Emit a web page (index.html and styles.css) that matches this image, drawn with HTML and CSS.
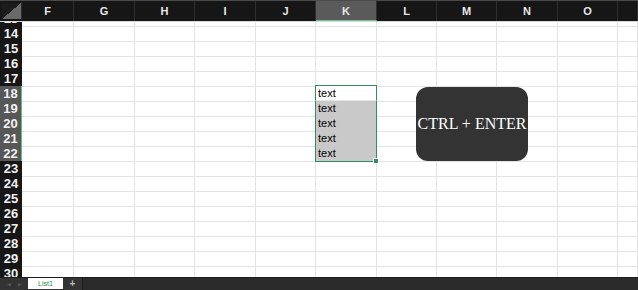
FILE: index.html
```html
<!DOCTYPE html>
<html lang="en">
<head>
  <meta charset="UTF-8" />
  <title>List1</title>
  <link rel="stylesheet" href="styles.css">
</head>
<body>

  <div class="app">
    <div class="col-heads">
      <div class="corner"></div>
      <div class="col-head">F</div>
      <div class="col-head">G</div>
      <div class="col-head">H</div>
      <div class="col-head">I</div>
      <div class="col-head">J</div>
      <div class="col-head active">K</div>
      <div class="col-head">L</div>
      <div class="col-head">M</div>
      <div class="col-head">N</div>
      <div class="col-head">O</div>
      <div class="col-head"></div>
    </div>

    <div class="viewport">
      <div class="rows" id="rows"></div>
    </div>

    <div class="hint">CTRL + ENTER</div>

    <div class="tabs">
      <div class="nav"><span>&#9664;</span><span>&#9654;</span></div>
      <div class="tab">List1</div>
      <div class="add">+</div>
      <div class="tabs-rest"></div>
    </div>
  </div>

  <script>
    const rows = document.getElementById('rows');
    const cols = 11;
    for (let r = 13; r <= 30; r++) {
      const row = document.createElement('div');
      row.className = 'row';
      const head = document.createElement('div');
      head.className = 'row-head' + (r >= 18 && r <= 22 ? ' active' : '');
      head.textContent = r;
      row.appendChild(head);
      for (let c = 0; c < cols; c++) {
        const cell = document.createElement('div');
        cell.className = 'cell';
        if (c === 5 && r >= 18 && r <= 22) {
          cell.classList.add('sel');
          cell.textContent = 'text';
          if (r === 18) cell.classList.add('first');
          if (r === 22) cell.classList.add('last');
        }
        row.appendChild(cell);
      }
      rows.appendChild(row);
    }
  </script>
</body>
</html>
```

FILE: styles.css
```css
* {
  box-sizing: border-box;
}

body {
  margin: 0;
  background: #fff;
  font-family: 'Liberation Sans', Arial, sans-serif;
}

.app {
  position: relative;
  width: 638px;
  height: 290px;
  display: flex;
  flex-direction: column;
  overflow: hidden;
}

.col-heads,
.row {
  display: grid;
  grid-template-columns: 22px 52px 61px 60px 61px 60px 61px 60px 60px 61px 60px 20px;
}

.col-heads {
  height: 22px;
  background: #161616;
  border-top: 1px solid #4a4a4a;
  border-bottom: 1px solid #d8d8d8;
}

.corner {
  background: linear-gradient(to bottom right, #1c1c1c 50%, #6a6a6a 50%);
  border: 2px solid #161616;
  border-right: 1px solid #2e2e2e;
}

.col-head {
  color: #e8e8e8;
  font-size: 11px;
  font-weight: bold;
  display: flex;
  align-items: center;
  justify-content: center;
  border-right: 1px solid #2e2e2e;
}

.col-head.active {
  background: #5a5a5a;
  border-bottom: 1px solid #6cc593;
}

.viewport {
  height: 255px;
  overflow: hidden;
}

.rows {
  margin-top: -11px;
}

.row {
  height: 15px;
}

.row-head {
  background: #161616;
  color: #f2f2f2;
  font-size: 13px;
  font-weight: bold;
  display: flex;
  align-items: center;
  justify-content: center;
  border-bottom: 1px solid #2c2c2c;
}

.row-head.active {
  background: #575757;
  border-right: 1px solid #5fbf8a;
}

.cell {
  border-right: 1px solid #e4e4e4;
  border-bottom: 1px solid #e4e4e4;
  font-size: 11px;
  line-height: 14px;
  padding-left: 2px;
  color: #000;
}

.cell.sel {
  background: #c9c9c9;
  border-left: 1px solid #2f8f5f;
  border-right: 1px solid #2f8f5f;
  border-bottom-color: #b9b9b9;
  margin-left: -1px;
  position: relative;
}

.cell.first {
  background: #fff;
  border-top: 1px solid #2f8f5f;
  margin-top: -1px;
  height: 16px;
  line-height: 14px;
  border-bottom-color: #e4e4e4;
}

.cell.last {
  border-bottom: 1px solid #2f8f5f;
}

.cell.last::after {
  content: '';
  position: absolute;
  right: -3px;
  bottom: -3px;
  width: 4px;
  height: 4px;
  background: #2f8f5f;
  border: 1px solid #fff;
}

.hint {
  position: absolute;
  left: 416px;
  top: 87px;
  width: 112px;
  height: 74px;
  border-radius: 12px;
  background: #333;
  color: #fff;
  font-family: 'Liberation Serif', 'Times New Roman', serif;
  font-size: 16px;
  display: flex;
  align-items: center;
  justify-content: center;
  white-space: nowrap;
}

.tabs {
  height: 13px;
  display: flex;
  background: #333;
  border-top: 1px solid #1c1c1c;
}

.nav {
  width: 28px;
  display: flex;
  justify-content: space-around;
  align-items: center;
  color: #555;
  font-size: 5px;
  padding: 0 3px;
}

.tab {
  width: 35px;
  height: 11px;
  background: #fff;
  color: #1f8f52;
  font-size: 7px;
  display: flex;
  align-items: center;
  justify-content: center;
}

.add {
  width: 19px;
  color: #bbb;
  font-size: 10px;
  font-weight: bold;
  display: flex;
  align-items: center;
  justify-content: center;
  line-height: 1;
}

.tabs-rest {
  flex: 1;
  background: #2b2b2b;
  border-left: 1px solid #1c1c1c;
}
```
